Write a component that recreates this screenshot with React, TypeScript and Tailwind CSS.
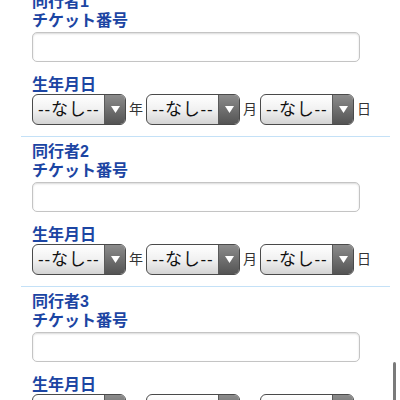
import React from "react";

const font = { fontFamily: '"Liberation Sans", "Noto Sans CJK JP", sans-serif' };

function Select() {
  return (
    <div className="flex h-[31px] w-[94px] shrink-0 overflow-hidden rounded-[6px] border border-[#4a4a4a] bg-gradient-to-b from-[#ffffff] via-[#f1f1f1] to-[#d4d4d4]">
      <div className="flex flex-1 items-center overflow-hidden whitespace-nowrap pl-[5px] text-[17px] tracking-[0.8px] text-[#111]">
        --なし--
      </div>
      <div className="flex w-[21px] shrink-0 items-center justify-center border-l border-[#5a5a5a] bg-gradient-to-b from-[#8c8c8c] to-[#545454]">
        <svg width="9" height="7" viewBox="0 0 9 7">
          <polygon points="0,0 9,0 4.5,7" fill="#ffffff" />
        </svg>
      </div>
    </div>
  );
}

function Section({ n }: { n: number }) {
  return (
    <div className="ml-[21px] w-[369px] border-t border-[#c4e1f7] pl-[11px] pt-[5px] pb-[11px]">
      <div className="h-[19px] text-[16px] font-bold leading-[19px] text-[#1c45a3]">同行者{n}</div>
      <div className="h-[19px] text-[16px] font-bold leading-[19px] text-[#1c45a3]">チケット番号</div>
      <div className="mt-[2px] h-[30px] w-[328px] rounded-[5px] border border-[#c4c4c4] bg-white shadow-[inset_0_1px_2px_rgba(0,0,0,0.15)]" />
      <div className="mt-[13px] h-[19px] text-[16px] font-bold leading-[19px] text-[#1c45a3]">生年月日</div>
      <div className="flex h-[31px] items-center">
        <Select />
        <span className="w-[20px] text-center text-[14px] text-[#333]">年</span>
        <Select />
        <span className="w-[20px] text-center text-[14px] text-[#333]">月</span>
        <Select />
        <span className="w-[20px] text-center text-[14px] text-[#333]">日</span>
      </div>
    </div>
  );
}

export default function App() {
  return (
    <div className="relative h-[400px] w-[400px] overflow-hidden bg-white" style={font}>
      <div className="-mt-[14px]">
        <Section n={1} />
        <Section n={2} />
        <Section n={3} />
      </div>
      <div className="absolute right-[4px] top-[362px] h-[40px] w-[3px] rounded-full bg-[#7a7a7a]" />
    </div>
  );
}
